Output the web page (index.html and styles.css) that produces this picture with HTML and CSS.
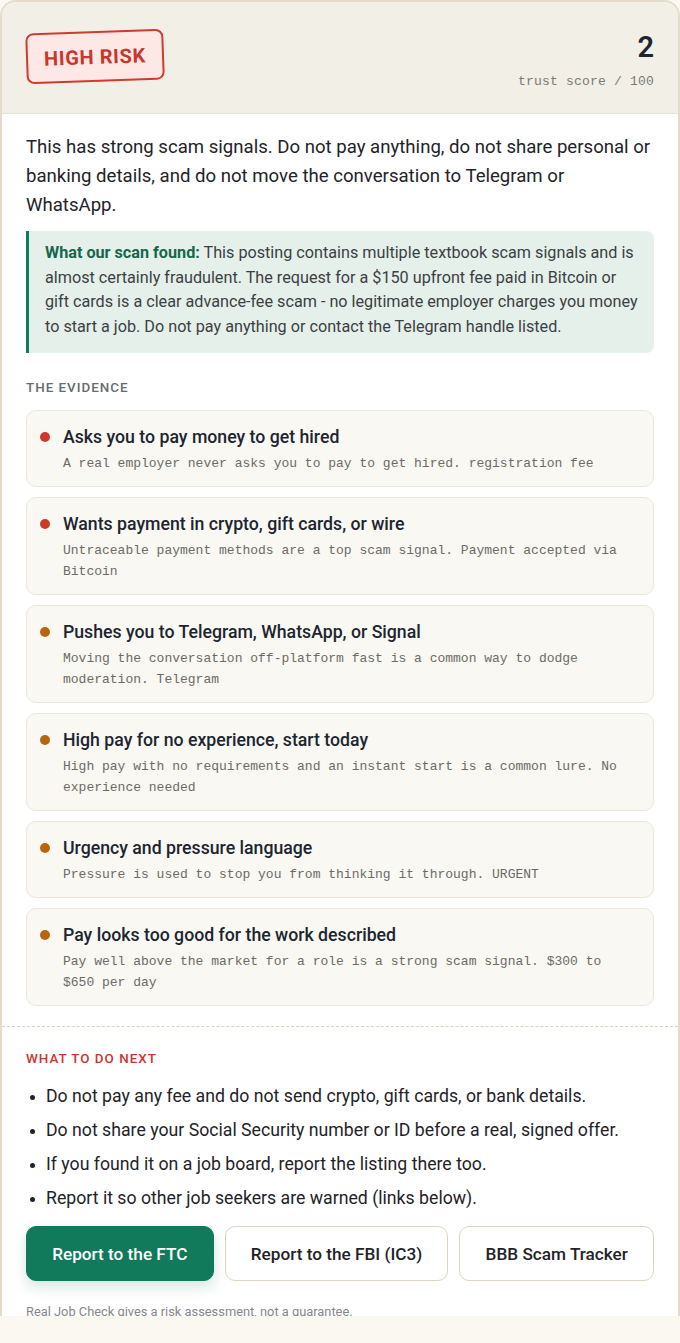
FILE: index.html
```html
<!DOCTYPE html>
<html lang="en">
<head>
    <meta charset="UTF-8">
    <meta name="viewport" content="width=device-width, initial-scale=1.0">
    <title>Real Job Check - Result</title>
    <link rel="stylesheet" href="styles.css">
</head>
<body>

    <div class="result">
        <div class="result-head">
            <div class="stamp">HIGH RISK</div>
            <div class="score">
                <div class="score-num">2</div>
                <div class="score-label">trust score / 100</div>
            </div>
        </div>

        <div class="result-body">
            <p class="summary">This has strong scam signals. Do not pay anything, do not share personal or banking details, and do not move the conversation to Telegram or WhatsApp.</p>

            <div class="scan">
                <strong>What our scan found:</strong> This posting contains multiple textbook scam signals and is almost certainly fraudulent. The request for a $150 upfront fee paid in Bitcoin or gift cards is a clear advance-fee scam - no legitimate employer charges you money to start a job. Do not pay anything or contact the Telegram handle listed.
            </div>

            <h2 class="label">The evidence</h2>

            <div class="evidence">
                <div class="flag">
                    <span class="dot red"></span>
                    <div>
                        <div class="flag-title">Asks you to pay money to get hired</div>
                        <div class="flag-detail">A real employer never asks you to pay to get hired. registration fee</div>
                    </div>
                </div>
                <div class="flag">
                    <span class="dot red"></span>
                    <div>
                        <div class="flag-title">Wants payment in crypto, gift cards, or wire</div>
                        <div class="flag-detail">Untraceable payment methods are a top scam signal. Payment accepted via Bitcoin</div>
                    </div>
                </div>
                <div class="flag">
                    <span class="dot amber"></span>
                    <div>
                        <div class="flag-title">Pushes you to Telegram, WhatsApp, or Signal</div>
                        <div class="flag-detail">Moving the conversation off-platform fast is a common way to dodge moderation. Telegram</div>
                    </div>
                </div>
                <div class="flag">
                    <span class="dot amber"></span>
                    <div>
                        <div class="flag-title">High pay for no experience, start today</div>
                        <div class="flag-detail">High pay with no requirements and an instant start is a common lure. No experience needed</div>
                    </div>
                </div>
                <div class="flag">
                    <span class="dot amber"></span>
                    <div>
                        <div class="flag-title">Urgency and pressure language</div>
                        <div class="flag-detail">Pressure is used to stop you from thinking it through. URGENT</div>
                    </div>
                </div>
                <div class="flag">
                    <span class="dot amber"></span>
                    <div>
                        <div class="flag-title">Pay looks too good for the work described</div>
                        <div class="flag-detail">Pay well above the market for a role is a strong scam signal. $300 to $650 per day</div>
                    </div>
                </div>
            </div>
        </div>

        <div class="next">
            <h2 class="label label-red">What to do next</h2>
            <ul class="steps">
                <li>Do not pay any fee and do not send crypto, gift cards, or bank details.</li>
                <li>Do not share your Social Security number or ID before a real, signed offer.</li>
                <li>If you found it on a job board, report the listing there too.</li>
                <li>Report it so other job seekers are warned (links below).</li>
            </ul>
            <div class="actions">
                <a class="btn btn-main" href="#">Report to the FTC</a>
                <a class="btn" href="#">Report to the FBI (IC3)</a>
                <a class="btn" href="#">BBB Scam Tracker</a>
            </div>
            <p class="note">Real Job Check gives a risk assessment, not a guarantee.</p>
        </div>
    </div>

    <div class="bottom-bar"></div>

</body>
</html>
```

FILE: styles.css
```css
body {
    margin: 0;
    padding: 0;
    background: #faf8f0;
    font-family: 'Roboto', 'Noto Sans', sans-serif;
    color: #1f2328;
}

.result {
    height: 1316px;
    overflow: hidden;
    background: #ffffff;
    border: 2px solid #e3dccb;
    border-bottom: none;
    border-radius: 16px 16px 0 0;
    box-sizing: border-box;
}

.result-head {
    display: flex;
    justify-content: space-between;
    align-items: flex-start;
    background: #f2efe6;
    border-bottom: 1px solid #e8e3d6;
    padding: 28px 24px 0 24px;
    height: 112px;
    box-sizing: border-box;
}

.stamp {
    margin-top: 1px;
    padding: 13px 16px 12px;
    border: 2px solid #cf3b2e;
    border-radius: 8px;
    background: #fde8e6;
    color: #c8372d;
    font-weight: 700;
    font-size: 20px;
    letter-spacing: 0.6px;
    line-height: 22px;
    transform: rotate(-2deg);
}

.score {
    text-align: right;
}

.score-num {
    font-size: 29px;
    font-weight: 600;
    line-height: 36px;
    color: #1c2530;
    margin-top: -1px;
}

.score-label {
    font-family: 'Liberation Mono', monospace;
    font-size: 13px;
    letter-spacing: 0.2px;
    color: #7a7a76;
    margin-top: 9px;
}

.result-body {
    padding: 19px 24px 0 24px;
}

.summary {
    margin: 0 0 11px 0;
    font-size: 18.6px;
    line-height: 29px;
}

.scan {
    background: #e6f0ea;
    border-left: 3px solid #137a5a;
    border-radius: 0 8px 8px 0;
    padding: 10px 16px 14px 16px;
    font-size: 16.2px;
    line-height: 24.5px;
    color: #3b3f44;
}

.scan strong {
    color: #17674c;
    font-weight: 700;
}

.label {
    margin: 27px 0 15px 0;
    font-size: 13.4px;
    font-weight: 500;
    letter-spacing: 1px;
    text-transform: uppercase;
    color: #666b70;
}

.label-red {
    color: #c8372d;
    margin: 0 0 13px 0;
}

.evidence {
    display: flex;
    flex-direction: column;
    gap: 10px;
}

.flag {
    display: flex;
    gap: 13px;
    background: #faf8f2;
    border: 1px solid #ebe6da;
    border-radius: 10px;
    padding: 14px 16px 12px 13px;
}

.dot {
    flex: none;
    width: 10px;
    height: 10px;
    border-radius: 50%;
    margin-top: 7px;
}

.dot.red {
    background: #cc3a2c;
}

.dot.amber {
    background: #b8650f;
}

.flag-title {
    font-size: 17.7px;
    font-weight: 500;
    line-height: 24px;
    color: #1c2530;
}

.flag-detail {
    margin-top: 4px;
    font-family: 'Liberation Mono', monospace;
    font-size: 13px;
    line-height: 21px;
    color: #6b6b68;
}

.next {
    margin-top: 20px;
    border-top: 1px dashed #d8d3c5;
    padding: 24px 24px 0 24px;
}

.steps {
    margin: 0;
    padding: 0 0 0 20px;
    font-size: 17.7px;
    line-height: 34px;
}

.steps li::marker {
    font-size: 15px;
}

.actions {
    display: flex;
    gap: 11px;
    margin-top: 11px;
}

.btn {
    flex: 1 1 auto;
    display: flex;
    justify-content: center;
    align-items: center;
    height: 55px;
    padding: 0 20px;
    box-sizing: border-box;
    border: 1.5px solid #ddd5c2;
    border-radius: 10px;
    background: #ffffff;
    color: #1f2328;
    font-size: 17.2px;
    font-weight: 500;
    text-decoration: none;
}

.btn-main {
    background: #117a5b;
    border-color: #117a5b;
    color: #ffffff;
    box-shadow: 0 6px 14px rgba(17, 122, 91, 0.18);
}

.note {
    margin: 23px 0 0 0;
    font-size: 12.85px;
    color: #86868a;
}

.bottom-bar {
    height: 27px;
    background: #faf8f0;
}
```
